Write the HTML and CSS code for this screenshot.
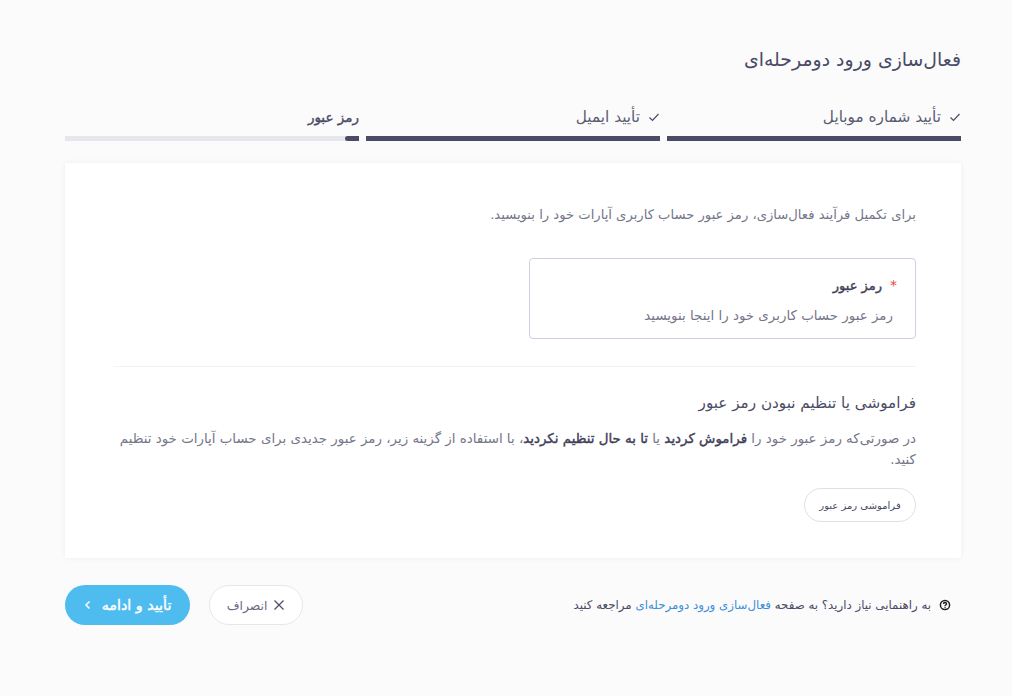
FILE: index.html
```html
<!DOCTYPE html>
<html lang="fa" dir="rtl">
<head>
  <meta charset="UTF-8" />
  <meta name="viewport" content="width=device-width, initial-scale=1.0" />
  <title>فعال‌سازی ورود دومرحله‌ای</title>
  <link rel="stylesheet" href="styles.css">
</head>
<body>

<div class="page">
  <h1>فعال‌سازی ورود دومرحله‌ای</h1>

  <div class="steps">
    <div class="step done">
      <div class="step-label">
        <svg class="check" viewBox="0 0 12 12"><path d="M1.5 6.5 4.5 9.5 10.5 3"/></svg>
        <span>تأیید شماره موبایل</span>
      </div>
      <div class="bar"><div class="bar-fill full"></div></div>
    </div>
    <div class="step done">
      <div class="step-label">
        <svg class="check" viewBox="0 0 12 12"><path d="M1.5 6.5 4.5 9.5 10.5 3"/></svg>
        <span>تأیید ایمیل</span>
      </div>
      <div class="bar"><div class="bar-fill full"></div></div>
    </div>
    <div class="step current">
      <div class="step-label"><span>رمز عبور</span></div>
      <div class="bar"><div class="bar-fill start"></div></div>
    </div>
  </div>

  <div class="card">
    <p class="intro">برای تکمیل فرآیند فعال‌سازی، رمز عبور حساب کاربری آپارات خود را بنویسید.</p>

    <div class="field">
      <label class="field-label"><span class="star">*</span>رمز عبور</label>
      <div class="field-input">رمز عبور حساب کاربری خود را اینجا بنویسید</div>
    </div>

    <hr class="divider">

    <h2>فراموشی یا تنظیم نبودن رمز عبور</h2>
    <p class="help">در صورتی‌که رمز عبور خود را <b>فراموش کردید</b> یا <b>تا به حال تنظیم نکردید</b>، با استفاده از گزینه زیر، رمز عبور جدیدی برای حساب آپارات خود تنظیم کنید.</p>
    <button class="btn-small">فراموشی رمز عبور</button>
  </div>

  <div class="footer">
    <div class="guide">
      <svg class="guide-icon" viewBox="0 0 12 12"><circle cx="6" cy="6" r="4.6"/><path d="M4.5 5C4.5 3 7.5 3 7.5 5C7.5 6 6 6 6 7.2"/><path d="M6 8.2V9"/></svg>
      <span>به راهنمایی نیاز دارید؟ به صفحه <a href="#">فعال‌سازی ورود دومرحله‌ای</a> مراجعه کنید</span>
    </div>
    <div class="actions">
      <button class="btn-cancel">
        <svg class="x" viewBox="0 0 12 12"><path d="M1.5 1.5 10.5 10.5M10.5 1.5 1.5 10.5"/></svg>
        انصراف
      </button>
      <button class="btn-primary">
        تأیید و ادامه
        <svg class="chev" viewBox="0 0 8 12"><path d="M5.5 2.5 2 6 5.5 9.5"/></svg>
      </button>
    </div>
  </div>
</div>

</body>
</html>
```

FILE: styles.css
```css
* {
  box-sizing: border-box;
}

body {
  margin: 0;
  background: #fbfbfc;
  color: #4a4b65;
  font-family: "DejaVu Sans", sans-serif;
}

.page {
  width: 896px;
  margin: 0 auto 0 65px;
  padding-top: 46px;
}

h1 {
  margin: 0;
  font-size: 18.9px;
  font-weight: normal;
  line-height: 26px;
  color: #4a4b65;
}

.steps {
  display: flex;
  gap: 7px;
  margin-top: 34px;
}

.step {
  flex: 1;
}

.step-label {
  display: flex;
  align-items: center;
  gap: 8px;
  height: 22px;
  font-size: 15.3px;
  color: #5b5c72;
}

.step.current .step-label {
  font-size: 13.5px;
  -webkit-text-stroke: 0.4px #4a4b65;
  color: #4a4b65;
}

.check {
  width: 12px;
  height: 12px;
  fill: none;
  stroke: #4a4b65;
  stroke-width: 1.2;
}

.bar {
  height: 5px;
  margin-top: 8px;
  background: #e6e6ed;
}

.bar-fill {
  height: 100%;
  background: #4a4b65;
}

.bar-fill.full {
  width: 100%;
}

.bar-fill.start {
  width: 14px;
  border-radius: 3px 0 0 3px;
}

.card {
  height: 395px;
  margin-top: 22px;
  padding: 41px 45px 0 48px;
  background: #fff;
  box-shadow: 0 0 6px rgba(40, 40, 80, 0.06);
}

.intro {
  margin: 0;
  font-size: 13.15px;
  line-height: 22px;
  color: #75768a;
}

.field {
  width: 387px;
  height: 81px;
  margin-top: 32px;
  padding: 15px 22px 0;
  border: 1px solid #cfcfe0;
  border-radius: 4px;
}

.field-label {
  display: block;
  font-size: 13px;
  -webkit-text-stroke: 0.4px #3f4058;
  line-height: 22px;
  color: #3f4058;
}

.star {
  margin-left: 8px;
  margin-right: -4px;
  color: #f0433f;
  font-size: 14px;
  -webkit-text-stroke: 0;
}

.field-input {
  margin-top: 8px;
  font-size: 13.4px;
  line-height: 22px;
  color: #75768a;
}

.divider {
  height: 1px;
  margin: 27px 0 0;
  border: 0;
  background: #f3f3f6;
}

h2 {
  margin: 24px 0 0;
  font-size: 15.2px;
  font-weight: normal;
  line-height: 24px;
  color: #4a4b65;
}

.help {
  margin: 13px 0 0;
  font-size: 13.4px;
  line-height: 21px;
  color: #75768a;
}

.help b {
  font-weight: normal;
  -webkit-text-stroke: 0.4px #3f4058;
  color: #3f4058;
}

.btn-small {
  display: block;
  width: 112px;
  height: 34px;
  margin-top: 18px;
  padding: 0;
  background: #fff;
  border: 1px solid #dfdfe8;
  border-radius: 17px;
  font-family: inherit;
  font-size: 10px;
  color: #4a4b65;
}

.footer {
  display: flex;
  justify-content: space-between;
  align-items: center;
  margin-top: 27px;
  padding-right: 10px;
}

.guide {
  display: flex;
  align-items: center;
  gap: 8px;
  font-size: 11.8px;
  color: #4a4b65;
}

.guide a {
  color: #3b8fd9;
  text-decoration: none;
}

.guide-icon {
  width: 12px;
  height: 12px;
  fill: none;
  stroke: #222;
  stroke-width: 1.5;
}

.actions {
  display: flex;
  gap: 19px;
}

.btn-cancel,
.btn-primary {
  display: flex;
  align-items: center;
  justify-content: center;
  height: 40px;
  padding: 0;
  border-radius: 20px;
  font-family: inherit;
}

.btn-cancel {
  width: 94px;
  gap: 6px;
  background: #fff;
  border: 1px solid #e6e6ef;
  color: #6a6b80;
  font-size: 12.4px;
}

.x {
  width: 12px;
  height: 12px;
  fill: none;
  stroke: #4a4b65;
  stroke-width: 1.2;
}

.btn-primary {
  width: 125px;
  gap: 10px;
  background: #4fbcf0;
  border: 0;
  color: #fff;
  font-size: 14.3px;
  -webkit-text-stroke: 0.4px #fff;
}

.chev {
  width: 8px;
  height: 12px;
  fill: none;
  stroke: #fff;
  stroke-width: 1.5;
}
```
